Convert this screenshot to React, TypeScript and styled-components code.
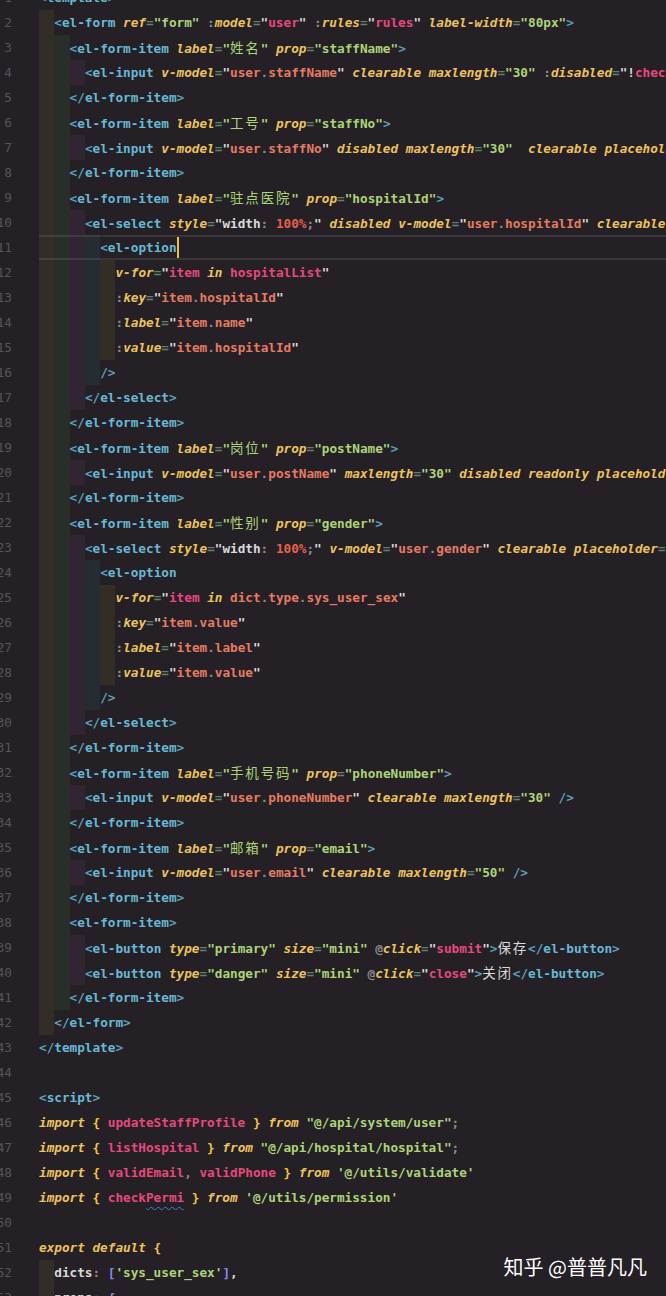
import React from "react";
import styled, { createGlobalStyle, css } from "styled-components";

type Kind =
  | "br" | "tag" | "attr" | "pre" | "eq" | "str" | "q" | "id" | "mem" | "dot"
  | "kw" | "num" | "punc" | "text" | "brace" | "brack" | "plain";

type T = { t: string; k: Kind; wavy?: boolean };

const COLORS: Record<Kind, string> = {
  br: "#5b9fba",
  tag: "#68b9d7",
  attr: "#eec35f",
  pre: "#8b8b8b",
  eq: "#5f8170",
  str: "#acd479",
  q: "#dadada",
  id: "#e6497d",
  mem: "#e57b63",
  dot: "#8b8b8b",
  kw: "#eec35f",
  num: "#e8604e",
  punc: "#8b8b8b",
  text: "#dadada",
  brace: "#f2c443",
  brack: "#8a86ec",
  plain: "#dadada",
};

const ITALIC: Partial<Record<Kind, boolean>> = { attr: true, kw: true };

const INDENT_COLORS = [
  "rgba(255, 255, 64, 0.065)",
  "rgba(127, 255, 127, 0.065)",
  "rgba(255, 127, 255, 0.065)",
  "rgba(79, 236, 236, 0.065)",
];

const CH = 7.65;

const GlobalStyle = createGlobalStyle`
  html, body {
    margin: 0;
    padding: 0;
    background: #242025;
    overflow: hidden;
  }
`;

const Page = styled.div`
  position: relative;
  width: 666px;
  height: 1296px;
  overflow: hidden;
  background: #242025;
`;

const Editor = styled.div`
  display: flex;
  flex-direction: column;
  margin-top: -15px;
  font-family: "DejaVu Sans Mono", "Liberation Mono", monospace;
  font-size: 12.7px;
  font-weight: 700;
`;

const Row = styled.div`
  display: flex;
  height: 25px;
  line-height: 25px;
`;

const LineNo = styled.div`
  width: 12px;
  flex: none;
  display: flex;
  justify-content: flex-end;
  color: #58545b;
  font-weight: 400;
  margin-right: 27px;
`;

const Code = styled.div<{ $current?: boolean }>`
  flex: 1;
  display: flex;
  align-items: center;
  white-space: pre;
  overflow: hidden;
  ${(p) =>
    p.$current &&
    css`
      box-shadow: inset 0 2px 0 #37343a, inset 0 -2px 0 #37343a;
    `}
`;

const Indent = styled.span<{ $level: number }>`
  display: inline-block;
  flex: none;
  width: ${CH * 2}px;
  height: 25px;
  background: ${(p) => INDENT_COLORS[p.$level % 4]};
`;

const Tok = styled.span<{ $c: string; $i?: boolean; $wavy?: boolean }>`
  color: ${(p) => p.$c};
  font-style: ${(p) => (p.$i ? "italic" : "normal")};
  ${(p) =>
    p.$wavy &&
    css`
      text-decoration: underline wavy #3f80d6;
      text-decoration-thickness: 1px;
      text-underline-offset: 4px;
    `}
`;

const Cjk = styled.span`
  font-family: "Noto Sans CJK SC", "Noto Sans", sans-serif;
  font-size: 13.5px;
  font-weight: 400;
  letter-spacing: ${CH * 2 - 13.5}px;
`;

const Cursor = styled.span`
  flex: none;
  width: 2px;
  height: 21px;
  margin-right: -2px;
  background: #eec140;
`;

const Watermark = styled.div`
  position: absolute;
  right: 19px;
  bottom: 17px;
  font-family: "Noto Sans CJK SC", "Noto Sans", sans-serif;
  font-size: 20px;
  line-height: 24px;
  color: #ffffff;
`;

/* ---------- tokenizers ---------- */

function exprTokens(v: string): T[] {
  const out: T[] = [];
  const parts = v.match(/[A-Za-z_$][\w$]*(?:\.[A-Za-z_$][\w$]*)*|\s+|\d+%?|./g) || [];
  for (const p of parts) {
    if (/^\s+$/.test(p)) out.push({ t: p, k: "plain" });
    else if (/^[A-Za-z_$]/.test(p) && p.includes(".")) {
      p.split(".").forEach((w, i) => {
        if (i > 0) out.push({ t: ".", k: "dot" });
        out.push({ t: w, k: "mem" });
      });
    } else if (p === "in") out.push({ t: p, k: "kw" });
    else if (/^[A-Za-z_$]/.test(p)) out.push({ t: p, k: "id" });
    else if (/^\d/.test(p)) out.push({ t: p, k: "num" });
    else if (p === "!") out.push({ t: p, k: "text" });
    else if (p === "'") out.push({ t: p, k: "str" });
    else out.push({ t: p, k: "punc" });
  }
  return out;
}

function styleTokens(v: string): T[] {
  const out: T[] = [];
  const parts = v.match(/[A-Za-z-]+|\d+%?|\s+|./g) || [];
  for (const p of parts) {
    if (/^\d/.test(p)) out.push({ t: p, k: "num" });
    else if (/^[A-Za-z]/.test(p)) out.push({ t: p, k: "text" });
    else if (/^\s+$/.test(p)) out.push({ t: p, k: "plain" });
    else out.push({ t: p, k: "punc" });
  }
  return out;
}

function tpl(src: string): T[] {
  const out: T[] = [];
  let s = src;
  let inTag = true;
  while (s.length) {
    let m: RegExpMatchArray | null;
    if ((m = s.match(/^(<\/?)([\w-]+)/))) {
      out.push({ t: m[1], k: "br" }, { t: m[2], k: "tag" });
      inTag = true;
    } else if ((m = s.match(/^\/?>/))) {
      out.push({ t: m[0], k: "br" });
      inTag = false;
    } else if ((m = s.match(/^\s+/))) {
      out.push({ t: m[0], k: "plain" });
    } else if (inTag && (m = s.match(/^([:@]?)([\w-]+)(?:=("([^"]*)"))?/))) {
      const [, pre, name, , val] = m;
      if (pre) out.push({ t: pre, k: "pre" });
      out.push({ t: name, k: "attr" });
      if (val !== undefined) {
        out.push({ t: "=", k: "eq" });
        const bound = !!pre || name.startsWith("v-");
        if (name === "style") {
          out.push({ t: '"', k: "q" }, ...styleTokens(val), { t: '"', k: "q" });
        } else if (bound) {
          out.push({ t: '"', k: "q" }, ...exprTokens(val), { t: '"', k: "q" });
        } else {
          out.push({ t: `"${val}"`, k: "str" });
        }
      }
    } else {
      m = s.match(/^[^<]+/) || [s[0]];
      out.push({ t: m[0], k: "text" });
    }
    s = s.slice(m[0].length);
  }
  return out;
}

const sp: T = { t: " ", k: "plain" };
const importLine = (names: T[][], path: string, semi: boolean): T[] => {
  const t: T[] = [{ t: "import", k: "kw" }, sp, { t: "{", k: "brace" }, sp];
  names.forEach((n, i) => {
    if (i > 0) t.push({ t: ",", k: "punc" }, sp);
    t.push(...n);
  });
  t.push(sp, { t: "}", k: "brace" }, sp, { t: "from", k: "kw" }, sp, { t: path, k: "str" });
  if (semi) t.push({ t: ";", k: "punc" });
  return t;
};
const id = (s: string): T[] => [{ t: s, k: "id" }];

type Line = { indent: number; toks: T[]; cursorAfter?: boolean };

const TEMPLATE: string[] = [
  `<template>`,
  `  <el-form ref="form" :model="user" :rules="rules" label-width="80px">`,
  `    <el-form-item label="姓名" prop="staffName">`,
  `      <el-input v-model="user.staffName" clearable maxlength="30" :disabled="!checkPermi(['system:user:edit'])" />`,
  `    </el-form-item>`,
  `    <el-form-item label="工号" prop="staffNo">`,
  `      <el-input v-model="user.staffNo" disabled maxlength="30"  clearable placeholder="请输入工号" />`,
  `    </el-form-item>`,
  `    <el-form-item label="驻点医院" prop="hospitalId">`,
  `      <el-select style="width: 100%;" disabled v-model="user.hospitalId" clearable placeholder="请选择驻点医院">`,
  `        <el-option`,
  `          v-for="item in hospitalList"`,
  `          :key="item.hospitalId"`,
  `          :label="item.name"`,
  `          :value="item.hospitalId"`,
  `        />`,
  `      </el-select>`,
  `    </el-form-item>`,
  `    <el-form-item label="岗位" prop="postName">`,
  `      <el-input v-model="user.postName" maxlength="30" disabled readonly placeholder="请输入岗位" />`,
  `    </el-form-item>`,
  `    <el-form-item label="性别" prop="gender">`,
  `      <el-select style="width: 100%;" v-model="user.gender" clearable placeholder="请选择性别">`,
  `        <el-option`,
  `          v-for="item in dict.type.sys_user_sex"`,
  `          :key="item.value"`,
  `          :label="item.label"`,
  `          :value="item.value"`,
  `        />`,
  `      </el-select>`,
  `    </el-form-item>`,
  `    <el-form-item label="手机号码" prop="phoneNumber">`,
  `      <el-input v-model="user.phoneNumber" clearable maxlength="30" />`,
  `    </el-form-item>`,
  `    <el-form-item label="邮箱" prop="email">`,
  `      <el-input v-model="user.email" clearable maxlength="50" />`,
  `    </el-form-item>`,
  `    <el-form-item>`,
  `      <el-button type="primary" size="mini" @click="submit">保存</el-button>`,
  `      <el-button type="danger" size="mini" @click="close">关闭</el-button>`,
  `    </el-form-item>`,
  `  </el-form>`,
  `</template>`,
  ``,
  `<script>`,
];

const LINES: Line[] = [
  ...TEMPLATE.map((src, i) => {
    const lead = (src.match(/^ */) || [""])[0].length;
    return { indent: lead / 2, toks: tpl(src.slice(lead)), cursorAfter: i === 10 };
  }),
  { indent: 0, toks: importLine([id("updateStaffProfile")], `"@/api/system/user"`, true) },
  { indent: 0, toks: importLine([id("listHospital")], `"@/api/hospital/hospital"`, true) },
  { indent: 0, toks: importLine([id("validEmail"), id("validPhone")], `'@/utils/validate'`, false) },
  {
    indent: 0,
    toks: importLine(
      [[{ t: "check", k: "id" }, { t: "Permi", k: "id", wavy: true }]],
      `'@/utils/permission'`,
      false
    ),
  },
  { indent: 0, toks: [] },
  {
    indent: 0,
    toks: [{ t: "export", k: "kw" }, sp, { t: "default", k: "kw" }, sp, { t: "{", k: "brace" }],
  },
  {
    indent: 1,
    toks: [
      { t: "dicts", k: "text" },
      { t: ":", k: "punc" },
      sp,
      { t: "[", k: "brack" },
      { t: "'sys_user_sex'", k: "str" },
      { t: "]", k: "brack" },
      { t: ",", k: "text" },
    ],
  },
  {
    indent: 1,
    toks: [{ t: "props", k: "text" }, { t: ":", k: "punc" }, sp, { t: "{", k: "brack" }],
  },
];

function renderText(text: string) {
  const pieces = text.split(/([\u3000-\u9fff]+)/);
  return pieces.map((p, i) =>
    /[\u3000-\u9fff]/.test(p) ? <Cjk key={i}>{p}</Cjk> : <React.Fragment key={i}>{p}</React.Fragment>
  );
}

export default function App() {
  return (
    <Page>
      <GlobalStyle />
      <Editor>
        {LINES.map((line, idx) => (
          <Row key={idx}>
            <LineNo>{idx + 1}</LineNo>
            <Code $current={line.cursorAfter}>
              {Array.from({ length: line.indent }).map((_, l) => (
                <Indent key={l} $level={l} />
              ))}
              <span>
                {line.toks.map((tk, j) => (
                  <Tok key={j} $c={COLORS[tk.k]} $i={ITALIC[tk.k]} $wavy={tk.wavy}>
                    {renderText(tk.t)}
                  </Tok>
                ))}
              </span>
              {line.cursorAfter && <Cursor />}
            </Code>
          </Row>
        ))}
      </Editor>
      <Watermark>知乎 @普普凡凡</Watermark>
    </Page>
  );
}
